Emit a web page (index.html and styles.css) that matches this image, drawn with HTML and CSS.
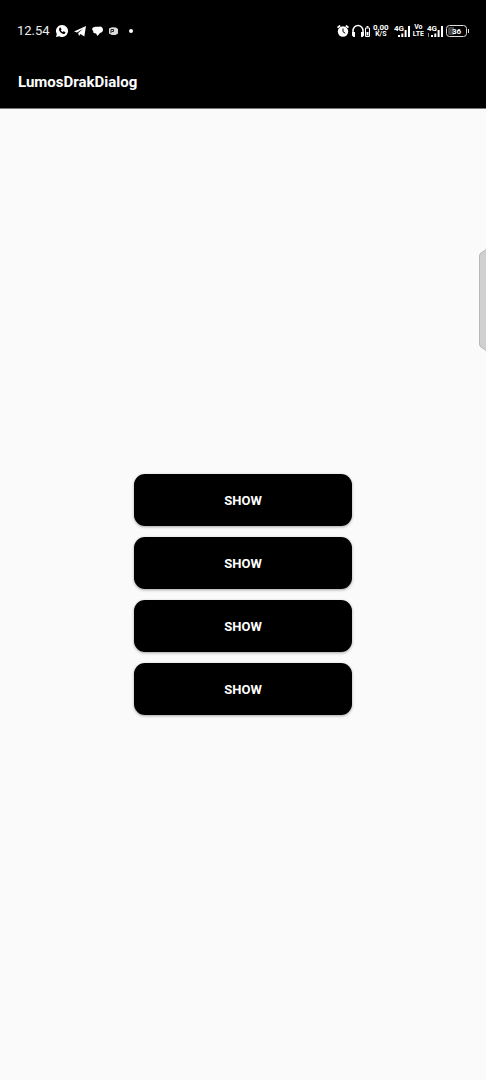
FILE: index.html
```html
<!DOCTYPE html>
<html lang="en">
<head>
<meta charset="utf-8">
<meta name="viewport" content="width=device-width, initial-scale=1">
<title>LumosDrakDialog</title>
<link rel="stylesheet" href="styles.css">
</head>
<body>
<header class="header">
  <div class="status">
    <div class="status-left">
      <time class="clock">12.54</time>
      <svg class="icon" width="12" height="12" viewBox="0 0 12 12"><path fill="#fff" d="M6 0a6 6 0 1 1-2.800 11.300L0 12l.8-3A6 6 0 0 1 6 0z"/><path fill="#000" d="M3.700 2.800l1-.2.8 1.800-.6.8c.4.9 1.100 1.500 1.900 1.900l.8-.8 1.800.9c0 1.200-.9 1.900-1.900 1.800C5.200 8.700 3 6.300 3 4.300c0-.6.3-1.200.7-1.500z"/></svg>
      <svg class="icon" width="12" height="12" viewBox="0 0 12 12"><path fill="#fff" d="M0 6.500L12 1l-1.700 10.500L6.500 9 5 11 4.200 8 9.200 3.700 3 7.500z"/></svg>
      <svg class="icon" width="11" height="12" viewBox="0 0 11 12"><path fill="#fff" d="M2.500 2C4 1.500 6 2.200 8 1.500c1.700 0 3 1.500 3 3 0 2-1.200 3.200-3 3.500L5.500 11 4 8.500C1.500 8.300 1 7.500 1.300 6-.5 5-.2 2.200 2.500 2z"/></svg>
      <svg class="icon icon-app" width="9" height="12" viewBox="0 0 9 12"><path fill="#ddd" d="M0 3.500l3-1.200L7 2.500l2 1.500v4.500L6.500 10H3L0 8.500z"/><path fill="none" stroke="#222" d="M2 8V4.500h2.500v2H2.500"/></svg>
      <svg class="icon icon-dot" width="4" height="4" viewBox="0 0 4 4"><circle cx="2" cy="2" r="2" fill="#fff"/></svg>
    </div>
    <div class="status-right">
      <svg class="icon" width="12" height="12" viewBox="0 0 12 12"><circle cx="6" cy="6.500" r="5.200" fill="#fff"/><path stroke="#fff" stroke-width="1.700" d="M.5 2.700L3.200.5M11.500 2.700L8.800.5"/><path fill="none" stroke="#000" d="M6 3.500v3.200l2.200 1.500"/></svg>
      <svg class="icon" width="18" height="14" viewBox="0 0 18 14"><path fill="none" stroke="#fff" stroke-width="1.500" d="M1 11V7a5 5.500 0 0 1 10 0v4"/><path fill="#fff" d="M0 8h3v5H1.500L0 11.500zM9 8h3v3.500L10.500 13H9z"/><path fill="#fff" d="M14.500 2h2v1.500h-2z"/><path fill="none" stroke="#fff" d="M13.500 4h4v8.500h-4z"/><path fill="#fff" d="M14.500 8h2v3.500h-2z"/></svg>
      <div class="stack stack-rate"><span class="rate">0,00</span><span>K/S</span></div>
      <svg class="icon" width="16" height="14" viewBox="0 0 16 14"><text class="network" x="0" y="7">4G</text><path fill="#fff" d="M4 11h2v2H4zM7.300 9.500h2V13h-2zM10.600 6h2v7h-2zM14 2h2v11h-2z"/></svg>
      <div class="stack"><span>Vo</span><span>LTE</span></div>
      <svg class="icon" width="16" height="14" viewBox="0 0 16 14"><text class="network" x="0" y="7">4G</text><path fill="#888" d="M1 9h1v4H1z"/><path fill="#fff" d="M4 11h2v2H4zM7.300 9.500h2V13h-2zM10.600 6h2v7h-2zM14 2h2v11h-2z"/></svg>
      <svg class="icon" width="23" height="12" viewBox="0 0 23 12"><rect x=".5" y=".5" width="20" height="11" rx="3" fill="#000" stroke="#ddd"/><path fill="#444" d="M3.500 2H8v8H3.500A1.500 1.500 0 0 1 2 8.500v-5A1.500 1.500 0 0 1 3.500 2z"/><path fill="#ddd" d="M22 4h1v4h-1z"/><text class="charge" x="10.500" y="9">36</text></svg>
    </div>
  </div>
  <h1 class="title">LumosDrakDialog</h1>
</header>
<main class="content">
  <button class="show" type="button">SHOW</button>
  <button class="show" type="button">SHOW</button>
  <button class="show" type="button">SHOW</button>
  <button class="show" type="button">SHOW</button>
  <svg class="edge-handle" width="7" height="104" viewBox="0 0 7 104"><path fill="#d0d0d0" stroke="#b8b8b8" d="M8 1L2 5Q.5 6 .5 8v88q0 2 1.500 3l6 4z"/></svg>
</main>
</body>
</html>
```
FILE: styles.css
```css
* {
  box-sizing: border-box;
}

body {
  margin: 0;
  min-height: 100vh;
  display: flex;
  flex-direction: column;
  background: #fafafa;
  font-family: Roboto, "Liberation Sans", sans-serif;
}

.header {
  background: #000;
  color: #fff;
  border-bottom: 1px solid #777;
}

.status {
  display: flex;
  justify-content: space-between;
  align-items: center;
  height: 62px;
  padding: 0 17px;
}

.status-left,
.status-right {
  display: flex;
  align-items: center;
}

.status-left {
  gap: 6px;
}

.status-right {
  gap: 3px;
}

.icon {
  display: block;
  flex: none;
}

.icon-dot {
  margin-left: 5px;
}

.clock {
  font-size: 13px;
  line-height: 16px;
  color: #eee;
}

.stack {
  display: flex;
  flex-direction: column;
  align-items: center;
  font-size: 7px;
  line-height: 7px;
  font-weight: 700;
}

.stack-rate {
  padding-right: 2px;
}

.rate {
  font-size: 8px;
}

.network {
  font-size: 8px;
  font-weight: 700;
  fill: #fff;
}

.charge {
  font-size: 8px;
  font-weight: 700;
  fill: #fff;
  text-anchor: middle;
}

.title {
  margin: 0;
  padding: 8px 18px 14px;
  font-size: 15px;
  line-height: 24px;
  font-weight: 700;
}

.content {
  position: relative;
  flex: 1;
  display: flex;
  flex-direction: column;
  align-items: center;
  justify-content: center;
  gap: 11px;
}

.show {
  width: 45%;
  padding: 19px 18px 17px;
  border: 0;
  border-radius: 11px;
  background: #000;
  box-shadow: 0 1px 3px rgba(0, 0, 0, 0.35);
  color: #fff;
  font-family: inherit;
  font-size: 13px;
  line-height: 16px;
  font-weight: 700;
}

.edge-handle {
  position: absolute;
  top: 139px;
  right: 0;
}
```
